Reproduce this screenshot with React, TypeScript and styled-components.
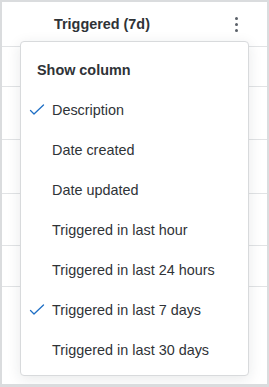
import { FC } from "react"
import styled, { createGlobalStyle } from "styled-components"

const GlobalStyle = createGlobalStyle`
  html, body {
    margin: 0;
    padding: 0;
    background: #ffffff;
  }
  body {
    font-family: "Liberation Sans", Arial, sans-serif;
    color: #2f3337;
  }
`

const Frame = styled.div`
  position: relative;
  box-sizing: border-box;
  width: 269px;
  height: 387px;
  border: 2px solid #dadcde;
  border-bottom-width: 3px;
  background: #fff;
  overflow: hidden;
`

const Header = styled.div`
  display: flex;
  align-items: center;
  justify-content: space-between;
  height: 44px;
  padding: 0 29px 0 52px;
  border-bottom: 1px solid #e1e3e5;
`

const HeaderTitle = styled.span`
  font-size: 14.4px;
  font-weight: bold;
  color: #2f3337;
`

const Kebab = styled.div`
  display: flex;
  flex-direction: column;
  gap: 3px;

  span {
    width: 3px;
    height: 3px;
    border-radius: 50%;
    background: #5a6068;
  }
`

const Row = styled.div<{ $h: number }>`
  height: ${(p) => p.$h}px;
  border-bottom: 1px solid #e1e3e5;
`

const Menu = styled.div`
  position: absolute;
  left: 18px;
  top: 39px;
  width: 229px;
  height: 335px;
  box-sizing: border-box;
  padding: 8px 0 5px;
  background: #fff;
  border: 1px solid #d8dadc;
  border-radius: 4px;
  box-shadow: 0 3px 14px rgba(30, 40, 50, 0.1);
`

const MenuTitle = styled.div`
  display: flex;
  align-items: center;
  height: 40px;
  padding-left: 16px;
  font-size: 14.4px;
  font-weight: bold;
  color: #2f3337;
`

const Item = styled.div`
  display: flex;
  align-items: center;
  height: 40px;
  font-size: 14.4px;
  color: #2f3337;
`

const CheckSlot = styled.span`
  display: flex;
  align-items: center;
  justify-content: flex-start;
  width: 31px;
  padding-left: 8px;
  box-sizing: border-box;
`

const Check: FC = () => (
  <svg width="16" height="12" viewBox="0 0 16 12" fill="none">
    <path d="M1.5 6.5 L5 10 L14.5 1" stroke="#1f6fc5" strokeWidth="1.3" strokeLinecap="round" strokeLinejoin="round" />
  </svg>
)

const columns = [
  { label: "Description", checked: true },
  { label: "Date created", checked: false },
  { label: "Date updated", checked: false },
  { label: "Triggered in last hour", checked: false },
  { label: "Triggered in last 24 hours", checked: false },
  { label: "Triggered in last 7 days", checked: true },
  { label: "Triggered in last 30 days", checked: false },
]

const rowHeights = [39, 52, 53, 51, 40]

const App: FC = () => {
  return (
    <>
      <GlobalStyle />
      <Frame>
        <Header>
          <HeaderTitle>Triggered (7d)</HeaderTitle>
          <Kebab>
            <span />
            <span />
            <span />
          </Kebab>
        </Header>
        {rowHeights.map((h, i) => (
          <Row key={i} $h={h} />
        ))}
        <Menu>
          <MenuTitle>Show column</MenuTitle>
          {columns.map((c) => (
            <Item key={c.label}>
              <CheckSlot>{c.checked && <Check />}</CheckSlot>
              {c.label}
            </Item>
          ))}
        </Menu>
      </Frame>
    </>
  )
}

export default App
